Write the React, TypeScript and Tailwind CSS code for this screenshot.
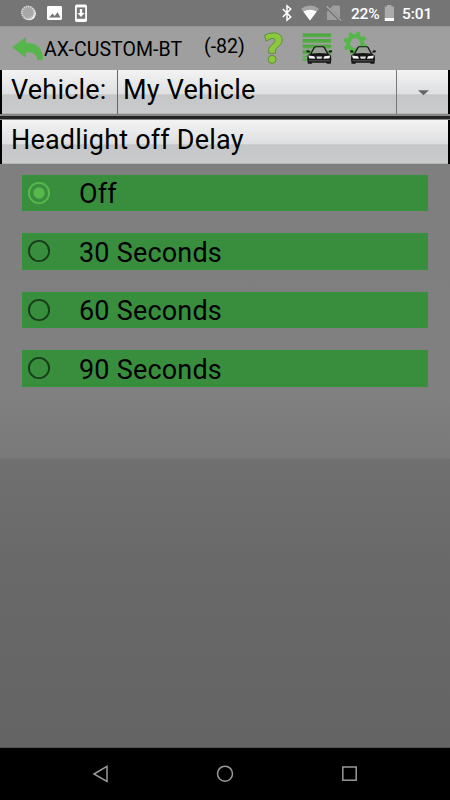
import React from "react";

function Car({ x, y }: { x: number; y: number }) {
  return (
    <g transform={`translate(${x} ${y})`}>
      <path d="M1.2 10.2 L4 8.2 L7.2 2.4 Q7.8 1 9.5 1 H16.5 Q18.2 1 18.8 2.4 L22 8.2 L24.8 10.2 L25 14.5 L24.4 18.6 H20.6 L20 17.6 H6 L5.4 18.6 H1.6 L1 14.5Z" fill="#161616" />
      <path d="M5.4 8.4 L8.3 3 Q8.7 2.1 9.8 2.1 H16.2 Q17.3 2.1 17.7 3 L20.6 8.4 Q13 7.4 5.4 8.4Z" fill="#9a9f98" />
      <path d="M-.2 5.6 Q1.6 4.6 3.2 5.6 L3.8 7.2 H.8Z M26.2 5.6 Q24.4 4.6 22.8 5.6 L22.2 7.2 H25.2Z" fill="#161616" />
      <path d="M2 10.4 L8 11 L9 13.6 L3 13.2Z M24 10.4 L18 11 L17 13.6 L23 13.2Z" fill="#f2f2f2" />
      <path d="M10 11.4 H16 L15.2 13.6 H10.8Z" fill="#ddd" />
      <path d="M2.5 15.6 H23.5" stroke="#777" strokeWidth=".7" />
    </g>
  );
}

function StatusBar() {
  return (
    <div className="flex h-[26px] shrink-0 bg-[#757575]">
      <svg width="345" height="26" viewBox="0 0 345 26" className="shrink-0">
        <circle cx="29" cy="13.5" r="6.8" fill="#fff" />
        <circle cx="28" cy="12.6" r="6.8" fill="#a8a8a8" />
        <circle cx="28" cy="12.6" r="6.2" fill="none" stroke="#dcdcdc" strokeWidth="1.8" strokeDasharray="1.1 1.1" />
        <rect x="47" y="6" width="15" height="14" rx="1.4" fill="#fff" />
        <path d="M49 17.6 L52.5 13.5 L54.7 16 L57.5 12.3 L60.5 17.6Z" fill="#757575" />
        <rect x="75" y="4.5" width="12" height="17.5" rx="1.8" fill="#fff" />
        <path d="M76.8 7.4 H85.2 V18.8 H76.8Z" fill="#757575" />
        <path d="M79.8 9 H82.2 V13 H84.6 L81 17 L77.4 13 H79.8Z" fill="#fff" />
        <path d="M282.8 9 L290.8 17 L287 20.2 V5.8 L290.8 9 L282.8 17" fill="none" stroke="#fff" strokeWidth="1.5" />
        <path d="M301 8.7 Q310 2.3 319 8.7 L310 20.5Z" fill="#a4a4a4" />
        <path d="M303.3 11.6 Q310 7.8 316.7 11.6 L310 20.5Z" fill="#fff" />
        <path d="M333 5.5 H338.5 Q340 5.5 340 7 V20 H327 V11.5Z" fill="#9e9e9e" />
        <path d="M326 6.4 L341 21" stroke="#757575" strokeWidth="3" />
        <path d="M326.8 6.3 L341 20.4" stroke="#ababab" strokeWidth="1.2" />
      </svg>
      <span className="mt-[5px] ml-[6px] w-[29px] text-[15.5px] leading-[18px] font-medium tracking-[-0.2px] whitespace-nowrap text-white">22%</span>
      <svg width="19" height="26" viewBox="380 0 19 26" className="shrink-0">
        <path d="M387 5 H391.5 V6.5 H394 V21 H384.8 V6.5 H387Z" fill="#aaa" />
        <path d="M384.8 18 H394 V21 H384.8Z" fill="#fff" />
      </svg>
      <span className="mt-[5px] ml-[3px] text-[15.5px] leading-[18px] font-medium tracking-[-0.1px] whitespace-nowrap text-white">5:01</span>
    </div>
  );
}

function Toolbar() {
  return (
    <div className="flex h-11 shrink-0 border-t border-[#959595] bg-[#9f9f9f]">
      <svg width="43" height="43" viewBox="0 27 43 43" className="shrink-0">
        <path d="M12 47.5 L26 37 V43 C36.5 42.2 43 48 43 60 H37.4 C37 54.6 33 51.4 26 52.3 V57.8Z" fill="#56b64b" />
      </svg>
      <span className="mt-[12px] ml-px w-[160px] text-[19.5px] leading-[22px] tracking-[0.05px] whitespace-nowrap">AX-CUSTOM-BT</span>
      <span className="mt-[9px] w-[52px] text-[19.5px] leading-[22px] whitespace-nowrap">(-82)</span>
      <svg width="194" height="43" viewBox="256 27 194 43" className="shrink-0">
        <defs>
          <linearGradient id="line" x1="0" y1="0" x2="0" y2="1">
            <stop stopColor="#46a437" /><stop offset="1" stopColor="#5fae50" />
          </linearGradient>
        </defs>
        <path d="M264.5 35.5 Q268 32.8 273.5 32.8 C279 32.8 282.2 35.7 282.2 40.2 C282.2 45.7 275.5 46.9 275.5 51 V53.2 H268.7 V49.8 C268.7 45.2 275 43.9 275 40.7 C275 37.3 270.8 37.9 266.3 41.1Z" fill="#8bc83e" stroke="#528232" strokeWidth=".8" />
        <circle cx="272.1" cy="59.4" r="4" fill="#8bc83e" stroke="#528232" strokeWidth=".8" />
        {[33.5, 39.1, 44.7, 50.3].map((y) => (
          <rect key={y} x="302.6" y={y} width="28.5" height="3.8" fill="url(#line)" />
        ))}
        <rect x="302.6" y="55.6" width="7" height="1.8" fill="#56b64b" />
        <rect x="302.6" y="58.6" width="7" height="2.4" fill="#56b64b" />
        <Car x={306.3} y={45.2} />
        <g transform="translate(355.2 43.2)">
          <circle r="7.1" fill="none" stroke="#56b64b" strokeWidth="4.1" />
          {[0, 45, 90, 135, 180, 225, 270, 315].map((a) => (
            <rect key={a} x="-2" y="-11.7" width="4" height="4.5" fill="#56b64b" transform={`rotate(${a + 17})`} />
          ))}
        </g>
        <Car x={350} y={45.2} />
      </svg>
    </div>
  );
}

const panel =
  "flex h-11 shrink-0 border-x-2 border-l-black border-r-black bg-[linear-gradient(180deg,#f3f3f4_0%,#dedfe0_55%,#c5c6c8_56%,#cacbcd_97%,#aaa_100%)] text-[27px] leading-8 tracking-[0.2px]";

function Radio({ on }: { on: boolean }) {
  return (
    <svg width="24" height="24" viewBox="0 0 24 24" className="mb-[0.5px] ml-[4px] shrink-0">
      <circle cx="12" cy="12" r="10.1" fill="none" stroke={on ? "#57b94b" : "#173d19"} strokeWidth="1.9" />
      {on && <circle cx="12" cy="12" r="5.7" fill="#57b94b" />}
    </svg>
  );
}

export default function App() {
  return (
    <div className="flex h-[800px] w-[450px] flex-col overflow-hidden bg-black font-['Roboto',sans-serif] text-black">
      <StatusBar />
      <Toolbar />
      <div className={panel}>
        <span className="w-[116px] border-r border-[#666] pt-[4px] pl-[9px] whitespace-nowrap">Vehicle:</span>
        <span className="w-[279px] border-r border-[#777] pt-[4px] pl-[5px] whitespace-nowrap">My Vehicle</span>
        <svg width="51" height="44" viewBox="397 70 51 44"><path d="M418 90.3 H429 L423.5 95.3Z" fill="#666" /></svg>
      </div>
      <div className="h-[6px] shrink-0 border-t-2 border-b border-[#888] bg-[#242424]" />
      <div className={panel}>
        <span className="pt-[4px] pl-[9px] whitespace-nowrap">Headlight off Delay</span>
      </div>
      <main className="flex h-[584px] shrink-0 flex-col gap-[22px] bg-[linear-gradient(180deg,#7f7f7f_0px,#808080_230px,#797979_294px,#707070_295px,#696969_400px,#646464_583px,#404040_584px)] pt-[10.5px] pr-[22px] pl-[22px]">
        {["Off", "30 Seconds", "60 Seconds", "90 Seconds"].map((label, i) => (
          <div key={label} className="flex h-[36.5px] shrink-0 items-center border border-[#33923a] bg-[#398e3d]">
            <Radio on={i === 0} />
            <span className="ml-[28px] pt-[3px] text-[27px] leading-8 tracking-[0.2px] whitespace-nowrap">{label}</span>
          </div>
        ))}
      </main>
      <nav className="h-[52px] shrink-0 bg-black">
        <svg width="450" height="52" viewBox="0 748 450 52" fill="none" stroke="#999" strokeWidth="1.5">
          <path d="M94 774 L107 766.3 V781.5Z" />
          <circle cx="225" cy="773.7" r="7.5" />
          <rect x="342.8" y="767" width="13.4" height="13.2" />
        </svg>
      </nav>
    </div>
  );
}
